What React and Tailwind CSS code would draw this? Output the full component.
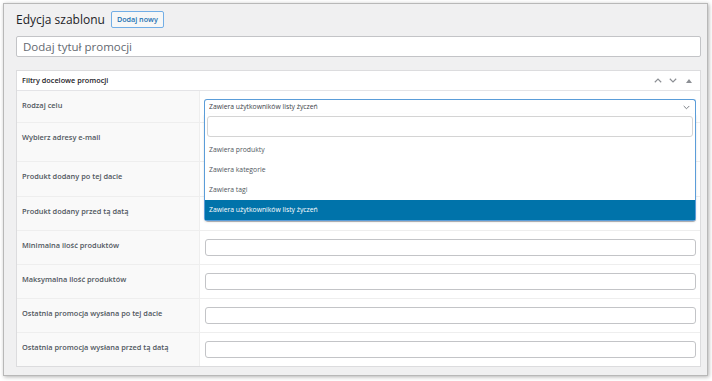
import { useState } from 'react';

const rows = [
  { label: 'Rodzaj celu', h: 'h-[32px]', kind: 'select' },
  { label: 'Wybierz adresy e-mail', h: 'h-[39px]', kind: 'multi' },
  { label: 'Produkt dodany po tej dacie', h: 'h-[35px]', kind: 'input' },
  { label: 'Produkt dodany przed tą datą', h: 'h-[34px]', kind: 'input' },
  { label: 'Minimalna ilość produktów', h: 'h-[34px]', kind: 'input' },
  { label: 'Maksymalna ilość produktów', h: 'h-[34px]', kind: 'input' },
  { label: 'Ostatnia promocja wysłana po tej dacie', h: 'h-[34px]', kind: 'input' },
  { label: 'Ostatnia promocja wysłana przed tą datą', h: 'h-[33px]', kind: 'input', last: true },
];

const options = ['Zawiera produkty', 'Zawiera kategorie', 'Zawiera tagi', 'Zawiera użytkowników listy życzeń'];

function Chevron({ up, className }) {
  return (
    <svg viewBox="0 0 10 6" className={className} fill="none" stroke="currentColor" strokeWidth="1.4">
      {up ? <path d="M1 5.2 5 1.2 9 5.2" /> : <path d="M1 0.8 5 4.8 9 0.8" />}
    </svg>
  );
}

function TargetSelect() {
  const [value] = useState(options[3]);
  return (
    <div className="relative mt-[8px] mr-[4px] ml-[4px]">
      <div className="h-[15px] border border-b-0 border-[#5b9dd9] rounded-t-[3px] bg-white flex items-center pl-[4px] pr-[5px]">
        <span className="text-[6.8px] text-[#3c434a] flex-1 truncate">{value}</span>
        <Chevron className="w-[7px] h-[5px] text-[#787c82]" />
      </div>
      <div className="absolute left-0 right-0 top-full z-10 bg-white border border-t-0 border-[#5b9dd9] rounded-b-[3px] shadow-[0_1px_2px_rgba(0,0,0,0.15)]">
        <div className="px-[2px] pt-[2px] pb-[3px]">
          <div className="h-[21px] border border-[#d4d4d4] rounded-[3px] bg-white" />
        </div>
        {options.map((o) => (
          <div
            key={o}
            className={
              o === value
                ? 'h-[19.5px] flex items-center pl-[4px] text-[6.8px] bg-[#0073aa] text-white'
                : 'h-[20px] flex items-center pl-[4px] text-[6.8px] text-[#50575e]'
            }
          >
            {o}
          </div>
        ))}
      </div>
    </div>
  );
}

export default function App() {
  return (
    <div className="w-[712px] h-[381px] bg-white pl-[3px] pt-[3px] font-['Open_Sans',sans-serif]">
      <div className="w-[705px] h-[373px] border border-[#b8b8b8] bg-[#f0f0f1] pl-[12px] pr-[6px] shadow-[1px_1px_4px_rgba(0,0,0,0.3)]">
        <div className="flex items-center gap-[6px] pt-[7px] h-[24px]">
          <h1 className="text-[12px] leading-none text-[#1d2327]">Edycja szablonu</h1>
          <button className="h-[17px] px-[5px] border border-[#72aee6] rounded-[2px] bg-[#f6f7f7] text-[#2271b1] text-[7.2px] font-semibold leading-none">
            Dodaj nowy
          </button>
        </div>

        <div className="mt-[8px] h-[21px] border border-[#c3c4c7] rounded-[2px] bg-white flex items-center pl-[6px]">
          <span className="text-[11.5px] text-[#646970]">Dodaj tytuł promocji</span>
        </div>

        <div className="mt-[13px] border border-[#dcdcde] bg-white">
          <div className="h-[20px] border-b border-[#e4e4e7] flex items-center pl-[5px] pr-[8px]">
            <span className="flex-1 text-[7.3px] font-semibold text-[#1d2327]">Filtry docelowe promocji</span>
            <Chevron up className="w-[8px] h-[5px] text-[#8c8f94]" />
            <Chevron className="w-[8px] h-[5px] ml-[7px] text-[#8c8f94]" />
            <svg viewBox="0 0 6 4" className="w-[6px] h-[4px] ml-[9px] text-[#8c8f94]" fill="currentColor">
              <path d="M0 4 3 0 6 4Z" />
            </svg>
          </div>
          {rows.map((r) => (
            <div key={r.label} className={`flex ${r.h} ${r.last ? '' : 'border-b border-[#eeeeee]'}`}>
              <div className="w-[183px] shrink-0 border-r border-[#eeeeee] bg-[#f9f9f9] pl-[5px] pt-[9px]">
                <span className="block text-[7.4px] leading-[10px] font-semibold text-[#50575e]">{r.label}</span>
              </div>
              <div className="flex-1 relative">
                {r.kind === 'select' && <TargetSelect />}
                {r.kind === 'multi' && (
                  <div className="mt-[8px] ml-[5px] mr-[4px] h-[22px] border border-[#c3c4c7] rounded-[3px] bg-white" />
                )}
                {r.kind === 'input' && (
                  <div className="mt-[8px] ml-[5px] mr-[4px] h-[17px] border border-[#c3c4c7] rounded-[3px] bg-white" />
                )}
              </div>
            </div>
          ))}
        </div>
      </div>
    </div>
  );
}
